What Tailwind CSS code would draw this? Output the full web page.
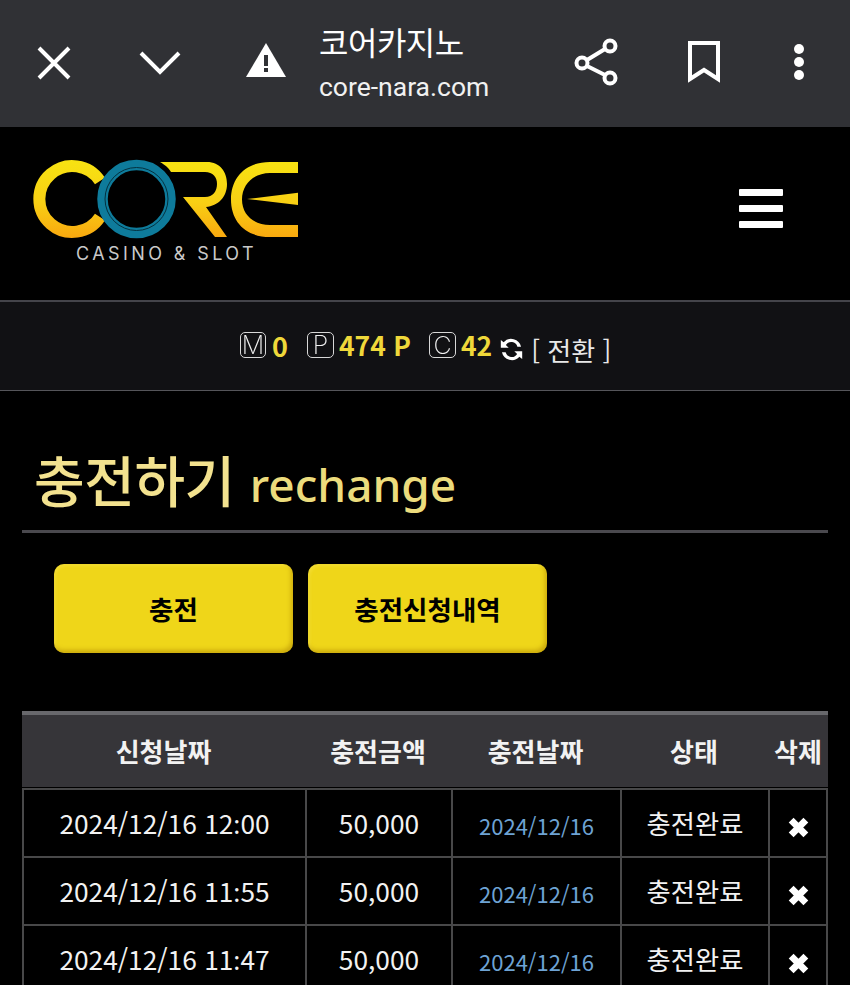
<!DOCTYPE html>
<html lang="ko"><head><meta charset="utf-8">
<script src="https://cdn.jsdelivr.net/npm/@tailwindcss/browser@4"></script>
</head>
<body class="bg-black">
<div class="w-[850px] h-[985px] overflow-hidden bg-black text-white font-['Noto_Sans_CJK_KR','Noto_Sans',sans-serif]">
  <!-- browser bar -->
  <div class="h-[127px] bg-[#303135] flex items-center relative">
    <svg class="absolute left-[37px] top-[46px]" width="34" height="34" viewBox="0 0 34 34" fill="none" stroke="#fff" stroke-width="4"><path d="M2 2 32 32M32 2 2 32"/></svg>
    <svg class="absolute left-[139px] top-[50px]" width="42" height="26" viewBox="0 0 42 26" fill="none" stroke="#fff" stroke-width="4"><path d="M2 3 21 22 40 3"/></svg>
    <svg class="absolute left-[245px] top-[42px]" width="42" height="36" viewBox="0 0 42 36"><path fill="#fff" d="M21 1 41 35H1Z"/><path fill="#303135" d="M19 13h4v11h-4zM19 26h4v4h-4z"/></svg>
    <div class="ml-[319px] flex flex-col">
      <div class="text-[32px] leading-[40px] h-[42px] tracking-[-0.5px] -mt-[2px]">코어카지노</div>
      <div class="text-[26.5px] leading-[36px] mt-[6px] text-[#f1f1f1] font-['Roboto',sans-serif]">core-nara.com</div>
    </div>
    <svg class="absolute left-[574px] top-[38px]" width="46" height="48" viewBox="0 0 46 48" fill="none" stroke="#fff" stroke-width="4"><circle cx="36" cy="8" r="5.5"/><circle cx="8" cy="25" r="5.5"/><circle cx="36" cy="40" r="5.5"/><path d="M31 11 13 22M13 28 31 37"/></svg>
    <svg class="absolute left-[686px] top-[41px]" width="36" height="42" viewBox="0 0 36 42" fill="none" stroke="#fff" stroke-width="4"><path d="M4 2H32V38L18 29 4 38Z"/></svg>
    <svg class="absolute left-[792px] top-[43px]" width="14" height="38" viewBox="0 0 14 38" fill="#fff"><circle cx="7" cy="6" r="5"/><circle cx="7" cy="19" r="5"/><circle cx="7" cy="32" r="5"/></svg>
  </div>
  <!-- site header -->
  <div class="h-[173px] relative bg-black">
    <svg class="absolute left-[30px] top-[30px]" width="272" height="84" viewBox="0 0 272 84" fill="none">
      <defs>
        <linearGradient id="g" gradientUnits="userSpaceOnUse" x1="0" y1="3" x2="0" y2="81"><stop offset="0" stop-color="#f7e312"/><stop offset=".55" stop-color="#f8cf14"/><stop offset="1" stop-color="#f9a80f"/></linearGradient>
      </defs>
      <path stroke="url(#g)" stroke-width="12" d="M70 24A33 33 0 1 0 70 60"/>
      <circle cx="106.5" cy="42" r="34" stroke="#0e7b9b" stroke-width="10.5"/>
      <circle cx="106.5" cy="42" r="31.5" stroke="#04313f" stroke-width="1"/>
      <path fill="url(#g)" d="M130 5H177C190 5 197 15 197 27C197 40 188 49 176 50L197 80H185L153 40H175C183 40 187 34 187 27C187 20 183 15 175 15H141C138 10 135 8 130 5Z"/>
      <path fill="url(#g)" d="M268 5H240C216 5 201 20 201 42.5C201 65 216 80 240 80H268V68H240C224 68 212 58 212 42.5C212 27 224 16 240 16H268Z"/>
      <path fill="url(#g)" d="M217 42 268 35.7V48Z"/>
    </svg>
    <div class="absolute left-[76px] top-[117px] text-[18px] leading-[20px] tracking-[3.4px] text-[#c9c9c9] font-['Inter',sans-serif]">CASINO &amp; SLOT</div>
    <div class="absolute left-[739px] top-[62px] w-[44px] flex flex-col gap-[9px]">
      <div class="h-[7px] bg-white rounded-[1px]"></div><div class="h-[7px] bg-white rounded-[1px]"></div><div class="h-[7px] bg-white rounded-[1px]"></div>
    </div>
  </div>
  <!-- points bar -->
  <div class="h-[91px] bg-[#111114] border-t-[2px] border-b-[1px] border-t-[#44444a] border-b-[#55555a] flex items-center pl-[240px] pb-[2px]">
    <span class="will-change-transform w-[26px] h-[26px] rounded-[5px] border-[1.5px] border-[#d8d8d8] text-[#f0f0f0] text-[25px] leading-[24px] font-extralight flex items-center justify-center font-['Inter',sans-serif]">M</span>
    <span class="ml-[6px] text-[27px] leading-none font-bold text-[#efd83a]">0</span>
    <span class="will-change-transform ml-[19px] w-[27px] h-[26px] rounded-[5px] border-[1.5px] border-[#d8d8d8] text-[#f0f0f0] text-[25px] leading-[24px] font-extralight flex items-center justify-center font-['Inter',sans-serif]">P</span>
    <span class="ml-[5px] text-[26.5px] leading-none font-bold text-[#efd83a]">474 P</span>
    <span class="will-change-transform ml-[18px] w-[27px] h-[26px] rounded-[5px] border-[1.5px] border-[#d8d8d8] text-[#f0f0f0] text-[25px] leading-[24px] font-extralight flex items-center justify-center font-['Inter',sans-serif]">C</span>
    <span class="ml-[5px] text-[26.5px] leading-none font-bold text-[#efd83a]">42</span>
    <svg class="ml-[6px] mt-[8px]" width="27" height="27" viewBox="0 0 24 24" fill="#fff"><path d="M20.5 9.5A9 9 0 0 0 5 5.6L2.5 3.5V10.5H9.5L7 8.1A5.6 5.6 0 0 1 17.2 9.5Z"/><path d="M3.5 14.5A9 9 0 0 0 19 18.4L21.5 20.5V13.5H14.5L17 15.9A5.6 5.6 0 0 1 6.8 14.5Z"/></svg>
    <span class="ml-[6px] text-[26px] leading-none mt-[10px] text-[#e8e8e8]">[ 전환 ]</span>
  </div>
  <!-- title -->
  <div class="mx-[22px] h-[142px] border-b-[3px] border-[#4a494e] flex items-end pl-[12px] pb-[13px] gap-[15px]">
    <span class="text-[55px] leading-[70px] tracking-[-0.4px] font-medium text-[#f3e28f] mb-[4px]">충전하기</span>
    <span class="text-[46px] leading-[66px] font-medium text-[#ecdc7d] font-['Noto_Sans',sans-serif]">rechange</span>
  </div>
  <!-- buttons -->
  <div class="flex gap-[15px] ml-[54px] mt-[31px]">
    <button class="w-[239px] h-[89px] rounded-[10px] bg-[#efd619] shadow-[inset_-2px_-3px_4px_rgba(170,130,0,0.5),inset_2px_2px_3px_rgba(255,240,110,0.3)] text-black text-[26.5px] font-bold">충전</button>
    <button class="w-[239px] h-[89px] rounded-[10px] bg-[#efd619] shadow-[inset_-2px_-3px_4px_rgba(170,130,0,0.5),inset_2px_2px_3px_rgba(255,240,110,0.3)] text-black text-[26.5px] font-bold">충전신청내역</button>
  </div>
  <!-- table -->
  <div class="mx-[22px] mt-[58px] w-[806px]">
    <div class="grid grid-cols-[283px_146px_169px_148px_60px] h-[76px] bg-[#363539] border-t-[4px] border-[#68686c] text-[26px] font-bold text-[#f2f2f2] text-center items-center pb-[2px]">
      <div>신청날짜</div><div>충전금액</div><div>충전날짜</div><div>상태</div><div class="whitespace-nowrap">삭제</div>
    </div>
    <div class="grid grid-cols-[283px_146px_169px_148px_60px] auto-rows-[68px] mt-[1px] text-[26.3px] text-center text-[#f2f2f2] [&>div]:border-l-[2.5px] [&>div]:border-t-[2.5px] [&>div]:border-[#484849] [&>div]:flex [&>div]:items-center [&>div]:justify-center">
      <div class="pt-[1px]"><span>2024/12/16 12<span class="font-['Noto_Sans']">:</span>00</span></div><div>50,000</div><div class="text-[22px] text-[#6ea3d4] pt-[5px]">2024/12/16</div><div>충전완료</div><div class="border-r-2"><svg class="mt-[9px]" width="21" height="21" viewBox="0 0 20 20"><path stroke="#fff" stroke-width="6.5" d="M3 3 17 17M17 3 3 17"/></svg></div>
      <div class="pt-[1px]"><span>2024/12/16 11<span class="font-['Noto_Sans']">:</span>55</span></div><div>50,000</div><div class="text-[22px] text-[#6ea3d4] pt-[5px]">2024/12/16</div><div>충전완료</div><div class="border-r-2"><svg class="mt-[9px]" width="21" height="21" viewBox="0 0 20 20"><path stroke="#fff" stroke-width="6.5" d="M3 3 17 17M17 3 3 17"/></svg></div>
      <div class="pt-[1px]"><span>2024/12/16 11<span class="font-['Noto_Sans']">:</span>47</span></div><div>50,000</div><div class="text-[22px] text-[#6ea3d4] pt-[5px]">2024/12/16</div><div>충전완료</div><div class="border-r-2"><svg class="mt-[9px]" width="21" height="21" viewBox="0 0 20 20"><path stroke="#fff" stroke-width="6.5" d="M3 3 17 17M17 3 3 17"/></svg></div>
    </div>
  </div>
</div>
</body></html>
